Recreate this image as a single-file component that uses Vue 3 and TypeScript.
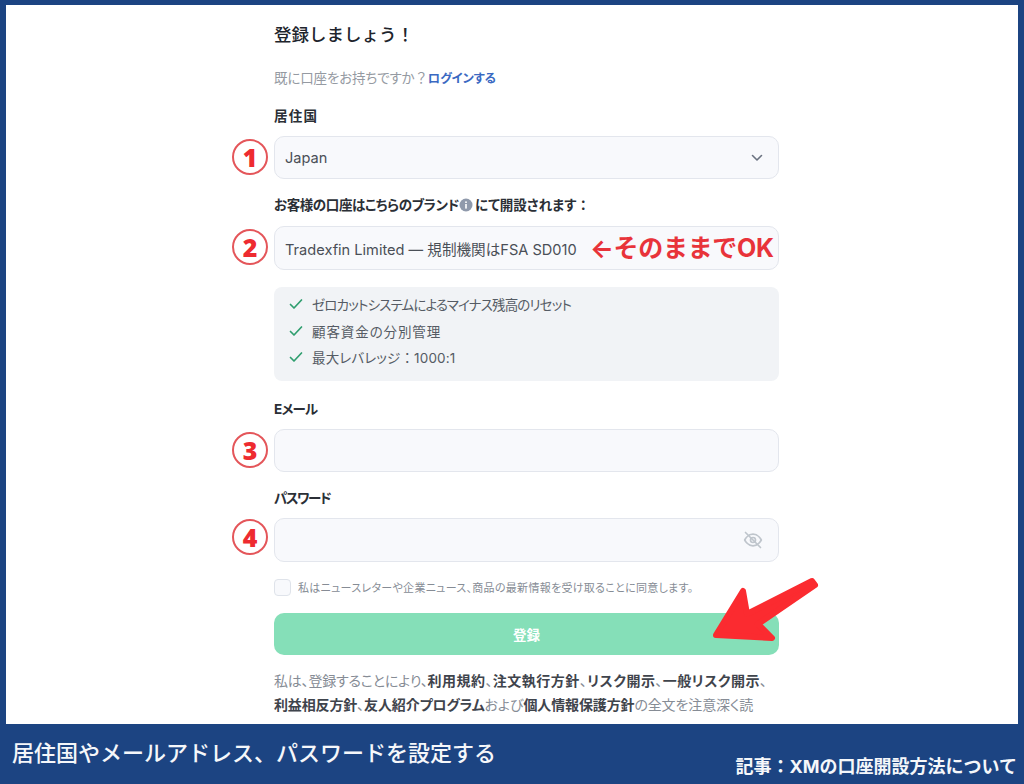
<script setup lang="ts">
interface Benefit { text: string; tail?: string; cls: string }
const benefits: Benefit[] = [
  { text: 'ゼロカットシステムによるマイナス残高のリセット', cls: 'r1' },
  { text: '顧客資金の分別管理', cls: 'r2' },
  { text: '最大レバレッジ', tail: '1000:1', cls: 'r3' },
]
</script>

<template>
  <div class="page">
    <main class="panel">
      <form class="form" @submit.prevent>
        <h1 class="title">登録しましょう！</h1>
        <p class="sub">既に口座をお持ちですか<span class="full">？</span><a class="login">ログインする</a></p>

        <label class="label first">居住国</label>
        <div class="field h43">
          <span class="badge">1</span>
          <span class="value">Japan</span>
          <svg class="chev" viewBox="0 0 12 8" width="12" height="8"><path d="M1.5 1.5 6 6l4.5-4.5" fill="none" stroke="#6b7280" stroke-width="1.6" stroke-linecap="round" stroke-linejoin="round"/></svg>
        </div>

        <label class="label second">
          <span class="brand">お客様の口座はこちらのブランド</span>
          <svg class="info" viewBox="0 0 14 14" width="14" height="14"><circle cx="7" cy="7" r="6.5" fill="#8f99ab"/><rect x="6.2" y="6" width="1.6" height="4.6" fill="#fff"/><rect x="6.2" y="3.4" width="1.6" height="1.6" fill="#fff"/></svg>にて開設されます<span class="full">：</span>
        </label>
        <div class="field h44 tight">
          <span class="badge">2</span>
          <span class="value">Tradexfin Limited — 規制機関はFSA SD010</span>
          <span class="note">←そのままでOK</span>
        </div>

        <ul class="benefits">
          <li v-for="b in benefits" :key="b.text" :class="b.cls">
            <svg viewBox="0 0 14 12" width="14" height="12"><path d="M1.5 6.5 5 10l7.5-8" fill="none" stroke="#2f9e6f" stroke-width="1.7" stroke-linecap="round" stroke-linejoin="round"/></svg>
            <span>{{ b.text }}<span v-if="b.tail" class="full">：</span>{{ b.tail }}</span>
          </li>
        </ul>

        <label class="label third">Eメール</label>
        <div class="field h43">
          <span class="badge">3</span>
          <input class="input" type="email" />
        </div>

        <label class="label fourth">パスワード</label>
        <div class="field h44">
          <span class="badge up">4</span>
          <input class="input" type="password" />
          <svg class="eye" viewBox="0 0 24 24" width="20" height="20" fill="none" stroke="#bfc5cc" stroke-width="2" stroke-linecap="round" stroke-linejoin="round">
            <path d="M2 12s3.6-7 10-7 10 7 10 7-3.6 7-10 7-10-7-10-7Z"/>
            <circle cx="12" cy="12" r="3"/>
            <path d="M3 3l18 18"/>
          </svg>
        </div>

        <div class="consent">
          <span class="box"></span>
          <span>私はニュースレターや企業ニュース、商品の最新情報を受け取ることに同意します。</span>
        </div>

        <button class="submit" type="submit">登録</button>

        <p class="terms">
          <span class="line1"><span class="lead">私は、登録することにより、</span><b>利用規約</b>、<b>注文執行方針</b>、<b>リスク開示</b>、<b>一般リスク開示</b>、</span><br /><span class="line2"><b>利益相反方針</b>、<b>友人紹介プログラム</b>および<b>個人情報保護方針</b>の全文を注意深く読</span>
        </p>
      </form>

      <svg class="arrow" viewBox="0 0 120 80" width="120" height="80">
        <path d="M11 60 38 16 42 39 107 6 110 10 53 49 67 63Z" fill="#fb2b30" stroke="#fb2b30" stroke-width="6" stroke-linejoin="round"/>
      </svg>
    </main>

    <footer class="footer">
      <span class="caption">居住国やメールアドレス、パスワードを設定する</span>
      <span class="article">記事：XMの口座開設方法について</span>
    </footer>
  </div>
</template>

<style>
html, body { margin: 0; background: #1c4482; }
</style>

<style scoped>
* { box-sizing: border-box; }
.page {
  width: 1024px;
  height: 784px;
  background: #1c4482;
  padding: 5px 6px 0 6px;
  display: flex;
  flex-direction: column;
  overflow: hidden;
  font-family: Inter, "Noto Sans CJK JP", sans-serif;
}
.panel {
  position: relative;
  height: 719px;
  flex: none;
  background: #fff;
  overflow: hidden;
  padding-left: 268px;
}
.form {
  width: 505px;
  padding-top: 15px;
  font-feature-settings: "palt" 1;
}
.full { font-feature-settings: normal; }
.title {
  margin: 0;
  font-size: 17.5px;
  line-height: 30px;
  font-weight: 500;
  color: #20242c;
  font-feature-settings: normal;
}
.sub {
  margin: 18px 0 0;
  height: 20px;
  font-size: 13.5px;
  line-height: 20px;
  letter-spacing: -0.15px;
  color: #959aa2;
  white-space: nowrap;
}
.login { color: #3a69c2; font-weight: 700; font-size: 12.3px; }
.label {
  display: block;
  height: 20px;
  font-size: 13.5px;
  line-height: 20px;
  font-weight: 700;
  color: #2b2f36;
  white-space: nowrap;
}
.first { margin: 18px 0 10px; letter-spacing: 1.3px; }
.second { margin: 16px 0 11px; }
.third { margin: 18px 0 10px; letter-spacing: -0.8px; }
.fourth { margin: 16px 0 10px; letter-spacing: -1.5px; }
.brand { letter-spacing: -0.4px; }
.info { vertical-align: -2px; margin: 0 2px 0 0; }
.field {
  position: relative;
  display: flex;
  align-items: center;
  padding: 0 10px;
  background: #f8f9fc;
  border: 1px solid #e3e6ed;
  border-radius: 10px;
}
.h43 { height: 43px; }
.h44 { height: 44px; }
.value {
  font-size: 14.6px;
  color: #4a4f57;
  white-space: nowrap;
}
.input {
  flex: 1;
  border: 0;
  background: transparent;
  outline: 0;
  height: 100%;
}
.chev { position: absolute; right: 15px; top: 17px; }
.eye { position: absolute; right: 15px; top: 11px; }
.badge {
  position: absolute;
  left: -43px;
  top: 2px;
  width: 36px;
  height: 36px;
  border: 2px solid #e4565a;
  border-radius: 50%;
  display: flex;
  align-items: center;
  justify-content: center;
  font-family: "Open Sans", sans-serif;
  font-weight: 800;
  font-size: 25px;
  line-height: 1;
  color: #ee2b30;
  background: #fff;
}
.badge.up { top: 0; }
.note {
  position: absolute;
  left: 315px;
  top: 5px;
  font-size: 25px;
  line-height: 32px;
  font-weight: 700;
  letter-spacing: -0.3px;
  color: #e8333a;
  white-space: nowrap;
  font-feature-settings: normal;
}
.benefits {
  list-style: none;
  margin: 17px 0 0;
  padding: 4px 15px;
  height: 94px;
  background: #f1f3f6;
  border-radius: 8px;
}
.benefits li {
  display: flex;
  align-items: center;
  gap: 9px;
  height: 26.5px;
  font-size: 13.5px;
  color: #555b64;
  white-space: nowrap;
}
.r1 { letter-spacing: -0.85px; }
.r2 { letter-spacing: 0.9px; }
.r3 { letter-spacing: 0.15px; }
.consent {
  margin-top: 16px;
  height: 18px;
  display: flex;
  align-items: center;
  gap: 7px;
  font-size: 11px;
  letter-spacing: 0.3px;
  color: #868c95;
  white-space: nowrap;
}
.box {
  flex: none;
  width: 17px;
  height: 17px;
  background: #f8f9fc;
  border: 1px solid #dfe3ea;
  border-radius: 4px;
}
.submit {
  display: block;
  width: 100%;
  height: 42px;
  margin-top: 17px;
  border: 0;
  border-radius: 10px;
  background: #85dfb8;
  color: #fff;
  font: inherit;
  font-size: 13.5px;
  font-weight: 700;
}
.terms {
  margin: 14px 0 0;
  font-size: 14px;
  line-height: 24px;
  letter-spacing: 0.27px;
  color: #868c95;
  white-space: nowrap;
}
.lead { letter-spacing: -0.2px; }
.line1 b { letter-spacing: 0.5px; }
.line2 { letter-spacing: -0.13px; }
.terms b { font-weight: 700; color: #3f444c; }
.arrow {
  position: absolute;
  left: 699px;
  top: 570px;
}
.footer {
  flex: 1;
  margin: 0 -6px;
  position: relative;
  padding: 15px 0 0 12px;
  color: #f5f7fa;
}
.caption {
  display: block;
  font-size: 22px;
  line-height: 28px;
  font-weight: 500;
  white-space: nowrap;
}
.article {
  position: absolute;
  right: 7px;
  bottom: 4px;
  font-size: 18px;
  line-height: 26px;
  font-weight: 700;
  white-space: nowrap;
}
</style>
